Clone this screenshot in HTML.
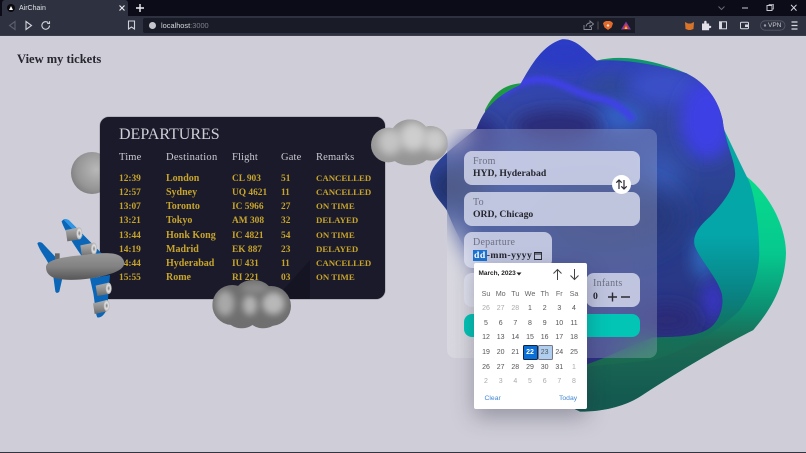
<!DOCTYPE html>
<html>
<head>
<meta charset="utf-8">
<style>
html,body{margin:0;padding:0;width:806px;height:453px;overflow:hidden;background:#cfced8}
body{position:relative;font-family:"Liberation Serif",serif;filter:blur(.35px)}
.a,.a *{box-sizing:border-box}
.a{position:absolute;white-space:nowrap}
.s{font-family:"Liberation Sans",sans-serif}
.h{color:#c9c9d0;font-size:10.5px;letter-spacing:.15px;line-height:12px}
.y{color:#c7a42a;font-size:9.4px;line-height:12px;font-weight:bold}
.n{font-size:10px}
.r{font-size:8.8px;margin-top:-.7px}
.box{position:absolute;background:rgba(226,229,243,.76);border-radius:8px}
.lab{position:absolute;left:9px;font-size:10px;letter-spacing:.25px;color:#6d7082;line-height:12px;white-space:nowrap}
.val{position:absolute;left:9px;font-size:9.7px;font-weight:bold;color:#24252d;line-height:12px;white-space:nowrap}
.d{position:absolute;width:14px;margin-left:-7px;text-align:center;font:7px/10px "Liberation Sans",sans-serif;color:#555}
.o{color:#aaa}
.w{color:#666;font-size:7.2px}
</style>
</head>
<body>

<!-- blob -->
<svg class="a" style="left:420px;top:30px" width="386" height="423" viewBox="0 0 1158 1269">
<defs>
<linearGradient id="gb" x1="0" y1="0" x2="1" y2="0"><stop offset="0" stop-color="#1f9a3c"/><stop offset=".5" stop-color="#0f9a68"/><stop offset="1" stop-color="#0c8f80"/></linearGradient>
<linearGradient id="gr" gradientUnits="userSpaceOnUse" x1="0" y1="440" x2="0" y2="1100"><stop offset="0" stop-color="#08dc8c"/><stop offset=".35" stop-color="#06c88e"/><stop offset=".6" stop-color="#0c8f72"/><stop offset=".75" stop-color="#1b6a54"/><stop offset="1" stop-color="#145a50"/></linearGradient>
<linearGradient id="gt" gradientUnits="userSpaceOnUse" x1="0" y1="300" x2="0" y2="1000"><stop offset="0" stop-color="#05a8a0"/><stop offset=".45" stop-color="#04a6aa"/><stop offset=".72" stop-color="#0a8080"/><stop offset=".88" stop-color="#14705a"/><stop offset="1" stop-color="#1a6a50"/></linearGradient>
<linearGradient id="gl" gradientUnits="userSpaceOnUse" x1="0" y1="30" x2="0" y2="1000"><stop offset="0" stop-color="#3040c4"/><stop offset=".25" stop-color="#34489f"/><stop offset=".55" stop-color="#283f8c"/><stop offset="1" stop-color="#2a2e80"/></linearGradient>
<filter id="b0" x="-30%" y="-60%" width="160%" height="220%"><feGaussianBlur stdDeviation="7"/></filter>
<filter id="b1" x="-60%" y="-60%" width="220%" height="220%"><feGaussianBlur stdDeviation="24"/></filter>
<filter id="b2" x="-60%" y="-60%" width="220%" height="220%"><feGaussianBlur stdDeviation="42"/></filter>
<clipPath id="cb"><path d="M30 440C35 395 110 345 170 295C190 245 215 205 300 165C335 100 370 45 425 28C465 25 490 55 530 92C610 85 720 105 800 130C860 160 895 210 908 270C915 340 950 400 945 440C940 480 900 530 870 560C835 590 815 620 825 650C840 690 890 740 905 790C915 840 890 885 860 900C820 922 760 920 700 922C620 950 560 985 480 1010C330 960 150 720 80 540C60 510 30 490 30 440Z"/></clipPath>
</defs>
<path d="M195 240C220 190 250 165 300 160L530 92C600 74 690 85 800 130L910 300L980 440L1000 900C900 950 750 1040 660 1100C600 1135 520 1150 470 1140C330 1060 240 900 195 700Z" fill="url(#gb)"/>
<path d="M980 440C1050 495 1098 590 1098 670C1095 760 1060 830 1000 900C900 950 750 1040 660 1100C620 1125 560 1145 480 1145L430 1120L500 1000L800 700Z" fill="url(#gr)"/>
<path d="M908 290L980 440C1005 480 1018 600 1018 670C1015 740 995 790 960 840C900 900 800 960 700 990L500 1010L800 560Z" fill="url(#gt)"/>
<path d="M30 440C35 395 110 345 170 295C190 245 215 205 300 165C335 100 370 45 425 28C465 25 490 55 530 92C610 85 720 105 800 130C860 160 895 210 908 270C915 340 950 400 945 440C940 480 900 530 870 560C835 590 815 620 825 650C840 690 890 740 905 790C915 840 890 885 860 900C820 922 760 920 700 922C620 950 560 985 480 1010C330 960 150 720 80 540C60 510 30 490 30 440Z" fill="url(#gl)"/>
<g clip-path="url(#cb)">
<ellipse cx="430" cy="70" rx="110" ry="50" fill="#2c3ac4" filter="url(#b1)"/>
<ellipse cx="570" cy="170" rx="60" ry="35" fill="#2f4a98" filter="url(#b1)"/>
<ellipse cx="730" cy="170" rx="100" ry="50" fill="#3a50c8" filter="url(#b1)"/>
<ellipse cx="860" cy="270" rx="80" ry="120" fill="#3d40e4" filter="url(#b1)"/>
<ellipse cx="600" cy="260" rx="70" ry="40" fill="#3060c4" filter="url(#b1)"/>
<ellipse cx="410" cy="290" rx="130" ry="50" fill="#2a2a78" filter="url(#b1)"/>
<ellipse cx="170" cy="320" rx="70" ry="60" fill="#272c80" filter="url(#b1)"/>
<path d="M240 195C290 160 330 145 370 150C430 155 470 195 540 205C580 215 610 235 640 270" fill="none" stroke="#4040ea" stroke-width="20" filter="url(#b0)"/>
<ellipse cx="720" cy="440" rx="60" ry="60" fill="#3a62c4" filter="url(#b2)"/>
<ellipse cx="560" cy="560" rx="220" ry="110" fill="#27397a" filter="url(#b2)"/>
<ellipse cx="120" cy="470" rx="80" ry="60" fill="#22306a" filter="url(#b1)"/>
<ellipse cx="850" cy="680" rx="30" ry="70" fill="#2f6ac0" filter="url(#b1)"/>
<ellipse cx="880" cy="810" rx="28" ry="60" fill="#3a34cc" filter="url(#b1)"/>
<ellipse cx="740" cy="870" rx="90" ry="45" fill="#2c2a78" filter="url(#b1)"/>
</g>
</svg>

<!-- left sphere -->
<div class="a" style="left:71px;top:152px;width:42px;height:42px;border-radius:50%;background:radial-gradient(circle at 60% 42%,#b8b8b8,#969696 55%,#666 100%)"></div>

<!-- departure board -->
<div class="a" style="left:100px;top:117px;width:285px;height:182px;border-radius:9px;background:#1a1a2b;box-shadow:0 0 1px #222">
<svg style="position:absolute;left:0;top:0" width="285" height="182"><path d="M175 182L210 143V182Z" fill="#141422"/></svg>
</div>
<div class="a" style="left:119px;top:125px;font-size:16px;line-height:19px;color:#cfcfd6">DEPARTURES</div>

<div class="a h" style="left:119px;top:152px">Time</div>
<div class="a h" style="left:166px;top:152px;letter-spacing:.28px">Destination</div>
<div class="a h" style="left:232px;top:152px">Flight</div>
<div class="a h" style="left:281px;top:152px">Gate</div>
<div class="a h" style="left:316px;top:152px">Remarks</div>

<div class="a y" style="left:119px;top:173px">12:39</div><div class="a y n" style="left:166px;top:173px">London</div><div class="a y" style="left:232px;top:173px">CL 903</div><div class="a y" style="left:281px;top:173px">51</div><div class="a y r" style="left:316px;top:173px">CANCELLED</div>
<div class="a y" style="left:119px;top:187px">12:57</div><div class="a y n" style="left:166px;top:187px">Sydney</div><div class="a y" style="left:232px;top:187px">UQ 4621</div><div class="a y" style="left:281px;top:187px">11</div><div class="a y r" style="left:316px;top:187px">CANCELLED</div>
<div class="a y" style="left:119px;top:201px">13:07</div><div class="a y n" style="left:166px;top:201px">Toronto</div><div class="a y" style="left:232px;top:201px">IC 5966</div><div class="a y" style="left:281px;top:201px">27</div><div class="a y r" style="left:316px;top:201px">ON TIME</div>
<div class="a y" style="left:119px;top:215px">13:21</div><div class="a y n" style="left:166px;top:215px">Tokyo</div><div class="a y" style="left:232px;top:215px">AM 308</div><div class="a y" style="left:281px;top:215px">32</div><div class="a y r" style="left:316px;top:215px">DELAYED</div>
<div class="a y" style="left:119px;top:230px">13:44</div><div class="a y n" style="left:166px;top:230px">Honk Kong</div><div class="a y" style="left:232px;top:230px">IC 4821</div><div class="a y" style="left:281px;top:230px">54</div><div class="a y r" style="left:316px;top:230px">ON TIME</div>
<div class="a y" style="left:119px;top:244px">14:19</div><div class="a y n" style="left:166px;top:244px">Madrid</div><div class="a y" style="left:232px;top:244px">EK 887</div><div class="a y" style="left:281px;top:244px">23</div><div class="a y r" style="left:316px;top:244px">DELAYED</div>
<div class="a y" style="left:119px;top:258px">14:44</div><div class="a y n" style="left:166px;top:258px">Hyderabad</div><div class="a y" style="left:232px;top:258px">IU 431</div><div class="a y" style="left:281px;top:258px">11</div><div class="a y r" style="left:316px;top:258px">CANCELLED</div>
<div class="a y" style="left:119px;top:272px">15:55</div><div class="a y n" style="left:166px;top:272px">Rome</div><div class="a y" style="left:232px;top:272px">RI 221</div><div class="a y" style="left:281px;top:272px">03</div><div class="a y r" style="left:316px;top:272px">ON TIME</div>

<!-- plane -->
<svg class="a" style="left:30px;top:210px" width="110" height="115" viewBox="0 0 330 345">
<defs>
<linearGradient id="fus" x1="0" y1="0" x2="0" y2="1"><stop offset="0" stop-color="#979797"/><stop offset=".5" stop-color="#828282"/><stop offset="1" stop-color="#565656"/></linearGradient>
<linearGradient id="eng" x1="0" y1="0" x2="0" y2="1"><stop offset="0" stop-color="#b0b0b0"/><stop offset=".6" stop-color="#8a8a8a"/><stop offset="1" stop-color="#6a6a6a"/></linearGradient>
<radialGradient id="cap"><stop offset="0" stop-color="#777"/><stop offset=".55" stop-color="#e4e4e4"/><stop offset="1" stop-color="#b0b0b0"/></radialGradient>
</defs>
<path d="M22 100C26 94 34 96 38 100L85 150L55 160C45 140 28 120 22 100Z" fill="#0b66b8"/>
<path d="M70 200L97 205L88 245C84 250 78 250 76 244Z" fill="#0b66b8"/>
<path d="M95 35C98 26 110 26 118 32L215 130L160 145C135 110 105 65 95 35Z" fill="#0b66b8"/>
<path d="M100 28C108 25 116 28 122 36L160 78L150 82Z" fill="#2f96e6"/>
<path d="M180 205L240 195L232 290C228 310 215 325 202 322C196 310 195 280 190 250Z" fill="#0b66b8"/>
<path d="M75 130h14v22h-14z" fill="#666"/>
<path d="M107 60L148 52V88L112 94Z" fill="url(#eng)"/><ellipse cx="148" cy="70" rx="9" ry="18" fill="url(#cap)"/>
<path d="M151 106L192 98V134L156 142Z" fill="url(#eng)"/><ellipse cx="192" cy="116" rx="9" ry="18" fill="url(#cap)"/>
<path d="M197 227L236 218V252L202 258Z" fill="url(#eng)"/><ellipse cx="236" cy="235" rx="9" ry="17" fill="url(#cap)"/>
<path d="M189 280L230 270V304L194 312Z" fill="url(#eng)"/><ellipse cx="230" cy="287" rx="9" ry="17" fill="url(#cap)"/>
<path d="M48 172C48 152 85 142 160 135C215 128 265 124 278 146C292 165 275 182 240 192C190 208 120 214 80 206C58 200 48 188 48 172Z" fill="url(#fus)"/>
</svg>

<!-- bottom cloud -->
<svg class="a" style="left:205px;top:270px" width="100" height="65" viewBox="0 0 300 195">
<defs>
<clipPath id="cc"><circle cx="82" cy="105" r="60"/><circle cx="198" cy="108" r="60"/><ellipse cx="145" cy="75" rx="58" ry="45"/><ellipse cx="110" cy="130" rx="52" ry="45"/><ellipse cx="175" cy="130" rx="52" ry="45"/></clipPath>
<filter id="b3" x="-50%" y="-50%" width="200%" height="200%"><feGaussianBlur stdDeviation="10"/></filter>
<filter id="b4" x="-50%" y="-50%" width="200%" height="200%"><feGaussianBlur stdDeviation="13"/></filter>
</defs>
<g clip-path="url(#cc)">
<rect width="300" height="195" fill="#6f6f6f"/>
<ellipse cx="60" cy="100" rx="28" ry="38" fill="#a8a8a8" filter="url(#b3)"/>
<ellipse cx="135" cy="105" rx="22" ry="30" fill="#b2b2b2" filter="url(#b3)"/>
<ellipse cx="205" cy="100" rx="34" ry="34" fill="#b8b8b8" filter="url(#b3)"/>
<ellipse cx="150" cy="55" rx="40" ry="16" fill="#8a8a8a" filter="url(#b3)"/>
</g>
</svg>

<!-- top right cloud -->
<svg class="a" style="left:360px;top:110px" width="100" height="70" viewBox="0 0 300 210">
<defs>
<clipPath id="ct"><circle cx="85" cy="105" r="52"/><circle cx="212" cy="100" r="52"/><ellipse cx="150" cy="88" rx="62" ry="60"/><ellipse cx="150" cy="130" rx="60" ry="36"/></clipPath>
</defs>
<g clip-path="url(#ct)">
<rect width="300" height="210" fill="#969696"/>
<ellipse cx="90" cy="95" rx="36" ry="40" fill="#c4c4c4" filter="url(#b4)"/>
<ellipse cx="160" cy="80" rx="42" ry="44" fill="#cecece" filter="url(#b4)"/>
<ellipse cx="225" cy="90" rx="36" ry="38" fill="#cbcbcb" filter="url(#b4)"/>
</g>
</svg>

<!-- glass panel -->
<div class="a" style="left:447px;top:129px;width:210px;height:229px;border-radius:8px;background:rgba(255,255,255,.2);backdrop-filter:blur(11px);-webkit-backdrop-filter:blur(11px)"></div>

<div class="box" style="left:464px;top:151px;width:176px;height:34px"><div class="lab" style="top:5px">From</div><div class="val" style="top:17px">HYD, Hyderabad</div></div>
<div class="box" style="left:464px;top:192px;width:176px;height:33.5px"><div class="lab" style="top:4.5px">To</div><div class="val" style="top:17px">ORD, Chicago</div></div>
<div class="box" style="left:464px;top:232px;width:88px;height:36px"><div class="lab" style="top:5px">Departure</div>
<div class="val" style="top:18px;letter-spacing:.45px"><span style="background:#1a73d0;color:#fff;padding:0 1px">dd</span>-mm-yyyy</div>
<svg style="position:absolute;left:69px;top:18px" width="10" height="11" viewBox="0 0 10 11"><path d="M1.500 2.500h7v7h-7zM1.500 4h7" fill="none" stroke="#24252d" stroke-width=".9"/></svg>
</div>
<div class="box" style="left:464px;top:273px;width:60px;height:34px"></div>
<div class="box" style="left:586px;top:273px;width:54px;height:34px"><div class="lab" style="top:5px;left:7px">Infants</div><div class="val" style="top:18px;left:7px">0</div>
<svg style="position:absolute;left:21px;top:18px" width="24" height="12" viewBox="0 0 24 12"><path d="M1 6h9M5.500 1.500v9M14 6h9" stroke="#2a2a33" stroke-width="1.400" fill="none"/></svg>
</div>
<div class="a" style="left:464px;top:314px;width:176px;height:23px;border-radius:8px;background:#02c5b6"></div>

<!-- swap -->
<div class="a" style="left:612px;top:175px;width:19px;height:19px;border-radius:50%;background:#fff"></div>
<svg class="a" style="left:612px;top:175px" width="19" height="19" viewBox="0 0 19 19"><path d="M7 14V5M4.300 7.700L7 5l2.700 2.700M12 5v9M9.300 11.300L12 14l2.700-2.700" fill="none" stroke="#2a2a33" stroke-width="1.200"/></svg>

<!-- calendar -->
<div class="a" style="left:473.500px;top:263px;width:113.500px;height:146px;background:#fff;border-radius:2px;box-shadow:0 8px 22px rgba(40,40,60,.35)"></div>
<div class="a s" style="left:478.500px;top:269px;font-size:6.500px;line-height:10px;font-weight:bold;color:#222">March, 2023</div>
<svg class="a" style="left:516px;top:271px" width="6" height="6"><path d="M.5 1.500h5L3 4.500z" fill="#222"/></svg>
<svg class="a" style="left:551px;top:268px" width="30" height="13" viewBox="0 0 30 13"><path d="M6.500 12V1.500M2.500 5.500l4-4 4 4M23.500 1v10.500M19.500 7.500l4 4 4-4" fill="none" stroke="#444" stroke-width="1"/></svg>

<div class="d w" style="left:486px;top:289px">Su</div><div class="d w" style="left:500.700px;top:289px">Mo</div><div class="d w" style="left:515.300px;top:289px">Tu</div><div class="d w" style="left:530px;top:289px">We</div><div class="d w" style="left:544.700px;top:289px">Th</div><div class="d w" style="left:559.300px;top:289px">Fr</div><div class="d w" style="left:574px;top:289px">Sa</div>

<div class="d o" style="left:486px;top:304px">26</div><div class="d o" style="left:500.700px;top:304px">27</div><div class="d o" style="left:515.300px;top:304px">28</div><div class="d" style="left:530px;top:304px">1</div><div class="d" style="left:544.700px;top:304px">2</div><div class="d" style="left:559.300px;top:304px">3</div><div class="d" style="left:574px;top:304px">4</div>
<div class="d" style="left:486px;top:318.500px">5</div><div class="d" style="left:500.700px;top:318.500px">6</div><div class="d" style="left:515.300px;top:318.500px">7</div><div class="d" style="left:530px;top:318.500px">8</div><div class="d" style="left:544.700px;top:318.500px">9</div><div class="d" style="left:559.300px;top:318.500px">10</div><div class="d" style="left:574px;top:318.500px">11</div>
<div class="d" style="left:486px;top:333.200px">12</div><div class="d" style="left:500.700px;top:333.200px">13</div><div class="d" style="left:515.300px;top:333.200px">14</div><div class="d" style="left:530px;top:333.200px">15</div><div class="d" style="left:544.700px;top:333.200px">16</div><div class="d" style="left:559.300px;top:333.200px">17</div><div class="d" style="left:574px;top:333.200px">18</div>

<div class="a" style="left:523px;top:345px;width:14.500px;height:14.500px;background:#0b6fd8;border:1px solid #12233f;border-radius:1.500px"></div>
<div class="a" style="left:538px;top:345px;width:14.500px;height:14.500px;background:#b0cff0;border:1px solid #778;border-radius:1.500px"></div>

<div class="d" style="left:486px;top:348px">19</div><div class="d" style="left:500.700px;top:348px">20</div><div class="d" style="left:515.300px;top:348px">21</div><div class="d" style="left:530px;top:348px;color:#fff;font-weight:bold">22</div><div class="d" style="left:544.700px;top:348px">23</div><div class="d" style="left:559.300px;top:348px">24</div><div class="d" style="left:574px;top:348px">25</div>
<div class="d" style="left:486px;top:362.500px">26</div><div class="d" style="left:500.700px;top:362.500px">27</div><div class="d" style="left:515.300px;top:362.500px">28</div><div class="d" style="left:530px;top:362.500px">29</div><div class="d" style="left:544.700px;top:362.500px">30</div><div class="d" style="left:559.300px;top:362.500px">31</div><div class="d o" style="left:574px;top:362.500px">1</div>
<div class="d o" style="left:486px;top:377.200px">2</div><div class="d o" style="left:500.700px;top:377.200px">3</div><div class="d o" style="left:515.300px;top:377.200px">4</div><div class="d o" style="left:530px;top:377.200px">5</div><div class="d o" style="left:544.700px;top:377.200px">6</div><div class="d o" style="left:559.300px;top:377.200px">7</div><div class="d o" style="left:574px;top:377.200px">8</div>

<div class="a s" style="left:484.500px;top:393.500px;font-size:6.800px;line-height:10px;color:#3f86d6">Clear</div>
<div class="a s" style="left:559px;top:393.500px;font-size:6.800px;line-height:10px;color:#3f86d6">Today</div>

<!-- heading -->
<div class="a" style="left:17px;top:51px;font-size:12.500px;line-height:16px;font-weight:bold;color:#26262e">View my tickets</div>

<!-- browser chrome -->
<div class="a" style="left:0;top:0;width:806px;height:16px;background:#0b0c17"></div>
<div class="a" style="left:2px;top:0;width:126px;height:16px;background:#2e3140;border-radius:3px 3px 0 0"></div>
<div class="a" style="left:0;top:16px;width:806px;height:19.500px;background:#2e3140"></div>
<div class="a" style="left:6.500px;top:4px;width:8px;height:8px;border-radius:50%;background:#0a0a0f"></div>
<svg class="a" style="left:6.500px;top:4px" width="8" height="8"><path d="M4 2L6 6H2z" fill="#fff"/></svg>
<div class="a s" style="left:19px;top:3.500px;font-size:7px;line-height:10px;color:#dfe0e6">AirChain</div>
<svg class="a" style="left:118px;top:4px" width="8" height="8"><path d="M1.500 1.500l5 5M6.500 1.500l-5 5" stroke="#e8e8ee" stroke-width="1.200"/></svg>
<svg class="a" style="left:135px;top:3px" width="10" height="10"><path d="M5 1v8M1 5h8" stroke="#f0f0f4" stroke-width="1.400"/></svg>
<svg class="a" style="left:6px;top:20px" width="46" height="11" viewBox="0 0 46 11"><path d="M9 1.500L3.500 5.500 9 9.500z" fill="none" stroke="#5c5f6e" stroke-width="1.100"/><path d="M20 1.500l5.500 4-5.500 4z" fill="none" stroke="#d0d1d8" stroke-width="1.100"/><path d="M43.500 5.500a3.800 3.800 0 1 1-1.200-2.800M43.500 1.200v2.300h-2.300" fill="none" stroke="#d0d1d8" stroke-width="1.100"/></svg>
<svg class="a" style="left:127px;top:20px" width="9" height="10"><path d="M1.500 1h6v8L4.500 7 1.500 9z" fill="none" stroke="#d0d1d8" stroke-width="1.100"/></svg>
<div class="a" style="left:143px;top:18px;width:492px;height:15px;background:#191b27;border-radius:2px 0 0 2px"></div>
<div class="a" style="left:149px;top:22px;width:7px;height:7px;border-radius:50%;background:#c6c7ce"></div>
<div class="a s" style="left:161px;top:20.500px;font-size:7.400px;line-height:10px;color:#d8d9df">localhost<span style="color:#7e808c">:3000</span></div>
<svg class="a" style="left:583px;top:20px" width="48" height="11" viewBox="0 0 48 11"><path d="M1 5v4.500h7.500V7M3 6.500C3.500 4 5 3 7 3V1l3.500 3L7 7V5" fill="none" stroke="#8a8c98" stroke-width=".9"/><path d="M15 1.500v8" stroke="#50525e"/><path d="M21 2l2-1h4l2 1 1 1.500-1.500 4L25 10l-3.500-2.500L20 3.500z" fill="#e0692c"/><path d="M25 4l1.500 1.500L25 7l-1.500-1.500z" fill="#f6e3d8"/><path d="M43 1.500L48 9.500H38z" fill="#7a3ba8"/><path d="M43 3.500L46 9H40z" fill="#e0402c"/><path d="M43 6l1.500 3h-3z" fill="#f6c22c"/></svg>
<svg class="a" style="left:684px;top:20px" width="118" height="11" viewBox="0 0 118 11">
<path d="M1 2l3 1.500h3L10 2l-.5 7-3 1h-2l-3-1z" fill="#d8742a"/>
<path d="M18 3.500h2.200V2a1.200 1.200 0 0 1 2.400 0v1.500h2.500v2.200h1a1.200 1.200 0 0 1 0 2.400h-1v2.200H18z" fill="#e0e0e6"/>
<rect x="35.500" y="1.800" width="7" height="7" fill="none" stroke="#d8d9df" stroke-width="1"/><rect x="35.500" y="1.800" width="2.500" height="7" fill="#d8d9df"/>
<rect x="56.500" y="2.300" width="8" height="6.500" rx="1" fill="none" stroke="#d8d9df" stroke-width="1"/><rect x="61" y="4.500" width="3.500" height="2.500" fill="#d8d9df"/>
<rect x="76.500" y=".8" width="24.500" height="9.400" rx="4.700" fill="none" stroke="#555865" stroke-width=".8"/><circle cx="81" cy="5.500" r="1.200" fill="#9a9ca8"/>
<path d="M107.500 2h6M107.500 5.500h6M107.500 9h6" stroke="#d8d9df" stroke-width="1.200"/>
</svg>
<div class="a s" style="left:768px;top:20.500px;font-size:6.500px;line-height:10px;color:#c8c9d0">VPN</div>
<svg class="a" style="left:717px;top:3px" width="88" height="10" viewBox="0 0 88 10"><path d="M1.500 3.500L4.500 6.500 7.500 3.500" fill="none" stroke="#666875" stroke-width="1"/><path d="M25 5h6" stroke="#c8c9d0" stroke-width="1"/><rect x="50" y="2.500" width="5" height="5" fill="none" stroke="#c8c9d0" stroke-width="1"/><path d="M52 2.500V1.500h4.500v4.500h-1" fill="none" stroke="#c8c9d0" stroke-width=".7"/><path d="M74 1.800l5.500 5.800M79.500 1.800L74 7.600" stroke="#d8d9df" stroke-width="1"/></svg>
<div class="a" style="left:0;top:35px;width:806px;height:1px;background:#3a3c4a"></div>
<div class="a" style="left:0;top:452px;width:806px;height:1px;background:#33343f"></div>

</body>
</html>
